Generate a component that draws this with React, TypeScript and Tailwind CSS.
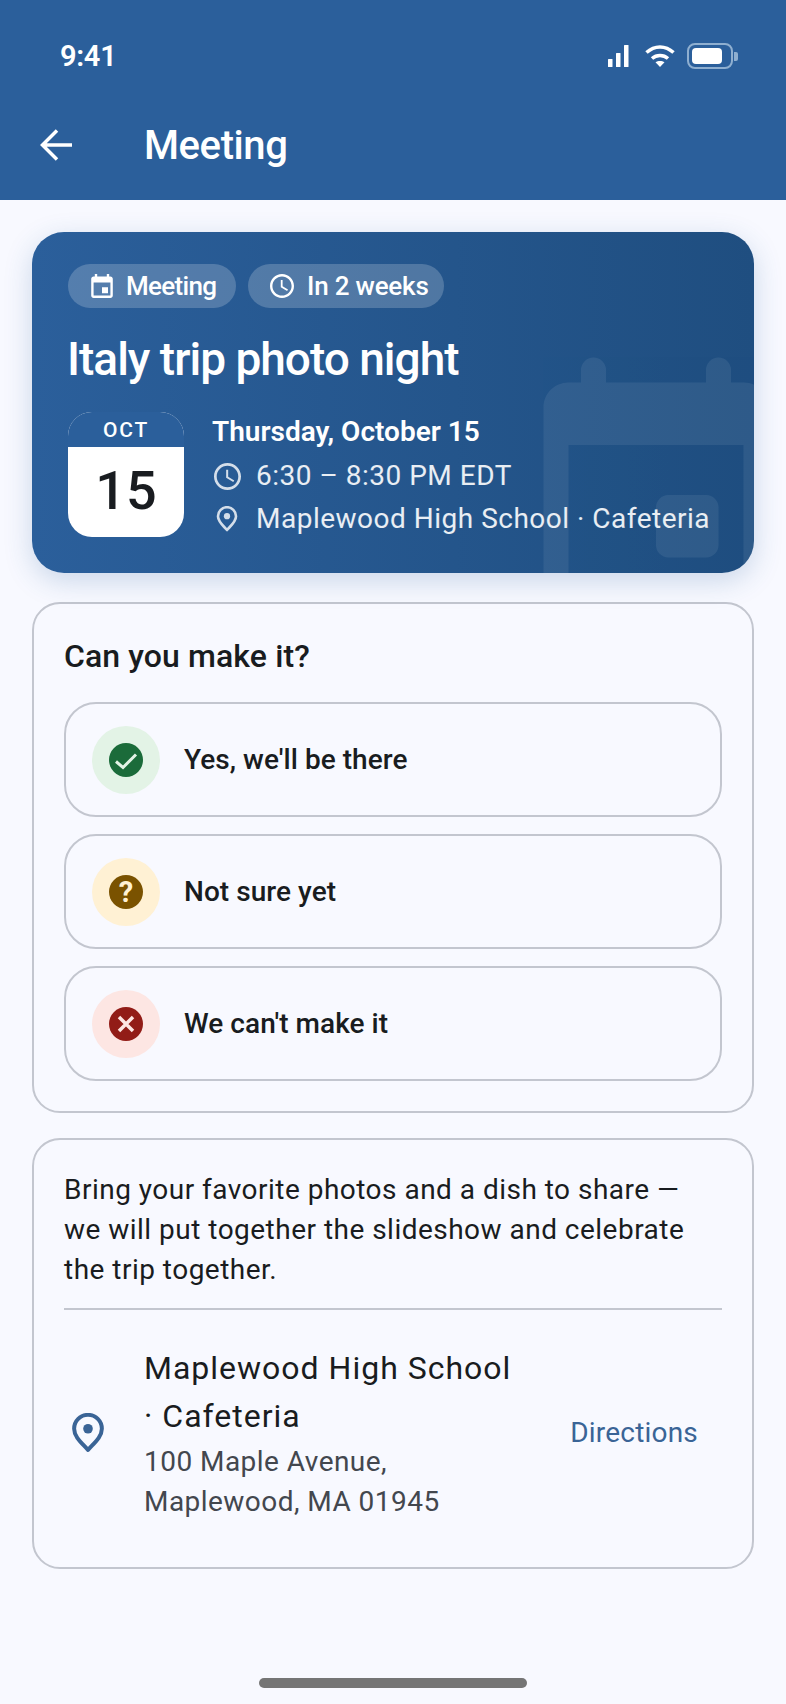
import React from "react";

const Clock = ({ className }: { className: string }) => (
  <svg viewBox="2 2 20 20" className={className} fill="currentColor">
    <path d="M11.99 2C6.47 2 2 6.48 2 12s4.47 10 9.99 10C17.52 22 22 17.52 22 12S17.52 2 11.99 2zM12 20c-4.42 0-8-3.58-8-8s3.58-8 8-8 8 3.58 8 8-3.58 8-8 8zm.5-13H11v6l5.25 3.15.75-1.23-4.5-2.67z" />
  </svg>
);

const Pin = ({ className }: { className: string }) => (
  <svg viewBox="0 0 24 30" className={className} fill="none">
    <path d="M12 27.7C8 23 1.6 18.2 1.6 11.8a10.4 10.4 0 0 1 20.8 0C22.4 18.2 16 23 12 27.7Z" stroke="currentColor" strokeWidth="3" strokeLinejoin="round" />
    <circle cx="12" cy="11.8" r="3.6" fill="currentColor" />
  </svg>
);

const Status = ({ bg, fg, children, label }: { bg: string; fg: string; children: React.ReactNode; label: string }) => (
  <div className="h-[115px] mb-[17px] last:mb-0 rounded-[32px] border-2 border-[#c3c6cf] flex items-center pl-[26px]">
    <div className={`w-[68px] h-[68px] rounded-full flex items-center justify-center ${bg}`}>
      <svg viewBox="0 0 34 34" className={`w-[34px] h-[34px] ${fg}`}>
        <circle cx="17" cy="17" r="17" fill="currentColor" />
        {children}
      </svg>
    </div>
    <span className="ml-[24px] text-[28px] leading-[40px] font-medium tracking-[0.05px] text-[#191c20]">{label}</span>
  </div>
);

export default function App() {
  return (
    <div className="w-[786px] h-[1704px] bg-[#f8f9ff] relative overflow-hidden font-['Roboto',sans-serif]">
      <header className="h-[200px] bg-[#2b5f9b] text-white">
        <div className="flex items-center justify-between pl-[60px] pr-[48px] pt-[38px] h-[74px]">
          <span className="text-[29px] leading-[36px] font-semibold tracking-[-0.3px]">9:41</span>
          <div className="flex items-center">
            <svg viewBox="0 0 21 22" className="w-[21px] h-[22px]" fill="white">
              <rect x="0" y="14" width="4.500" height="8" rx="0.5" />
              <rect x="8" y="8" width="4.500" height="14" rx="0.5" />
              <rect x="16" y="0" width="4.500" height="22" rx="0.5" />
            </svg>
            <svg viewBox="0 0 30 22" className="w-[30px] h-[22px] ml-[16px]" fill="none" stroke="white">
              <path d="M1.5 7.5C9.5 0 20.500 0 28.500 7.5" strokeWidth="3.500" />
              <path d="M7 13.500C11.500 9.500 18.500 9.500 23 13.500" strokeWidth="3.500" />
              <path d="M15 22L10.500 17.300C13 15.500 17 15.500 19.500 17.300Z" fill="white" stroke="none" />
            </svg>
            <div className="ml-[12px] w-[46px] h-[26px] rounded-[8px] border-2 border-[#8fafd0] p-[3px]">
              <div className="w-[30px] h-[16px] bg-white rounded-[4px]" />
            </div>
            <div className="ml-[1px] w-[4px] h-[9px] rounded-r-[2px] bg-[#8fafd0]" />
          </div>
        </div>
        <div className="flex items-center h-[60px] mt-[41px] pl-[40px]">
          <svg viewBox="0 0 32 32" className="w-[32px] h-[32px]" fill="none" stroke="white" strokeWidth="3.500">
            <path d="M32 16H2M17 1.500 2.500 16 17 30.500" />
          </svg>
          <h1 className="ml-[72px] mt-[2px] text-[40px] leading-[60px] font-medium tracking-[-0.4px]">Meeting</h1>
        </div>
      </header>

      <main className="px-[32px] pt-[32px]">
        <section className="relative h-[341px] rounded-[32px] overflow-hidden bg-gradient-to-r from-[#2b5f9b] to-[#1f4e80] shadow-[0_8px_28px_rgba(43,95,155,0.22)] text-white px-[36px] pt-[32px]">
          <svg viewBox="0 0 24 24" className="absolute -right-[52px] top-[113px] w-[300px] h-[300px] text-white opacity-[0.07]" fill="currentColor" fillRule="evenodd">
            <path d="M6 2a1 1 0 0 1 2 0v1h8V2a1 1 0 0 1 2 0v1h1c1.100 0 2 .9 2 2v14c0 1.100-.9 2-2 2H5c-1.110 0-2-.9-2-2V5c0-1.100.89-2 2-2h1V2zM5 8v11h14V8H5z" />
            <rect x="12" y="12" width="5" height="5" rx="1" />
          </svg>
          <div className="relative flex gap-[12px]">
            <div className="h-[44px] w-[168px] rounded-full bg-white/20 flex items-center pl-[23px]">
              <svg viewBox="3 1 18 20" className="w-[22px] h-[24px]" fill="white">
                <path d="M17 12h-5v5h5v-5zM16 1v2H8V1H6v2H5c-1.110 0-1.990.9-1.990 2L3 19c0 1.100.89 2 2 2h14c1.100 0 2-.9 2-2V5c0-1.100-.9-2-2-2h-1V1h-2zm3 18H5V8h14v11z" />
              </svg>
              <span className="ml-[13px] text-[26px] leading-[36px] font-medium tracking-[-0.7px]">Meeting</span>
            </div>
            <div className="h-[44px] w-[196px] rounded-full bg-white/20 flex items-center pl-[22px]">
              <Clock className="w-[24px] h-[24px]" />
              <span className="ml-[13px] text-[26px] leading-[36px] font-medium tracking-[-0.2px]">In 2 weeks</span>
            </div>
          </div>
          <h2 className="relative mt-[23px] -ml-[1px] text-[46px] leading-[56px] font-medium tracking-[-1px]">Italy trip photo night</h2>
          <div className="relative flex mt-[25px]">
            <div className="w-[116px] h-[125px] rounded-[24px] overflow-hidden bg-white flex flex-col items-center">
              <div className="w-full h-[35px] bg-[#2b5f9b] text-center text-[21px] leading-[36px] font-medium tracking-[1.700px]">OCT</div>
              <div className="text-[54px] leading-[88px] font-medium text-[#191c20]">15</div>
            </div>
            <div className="ml-[28px]">
              <div className="text-[28px] leading-[40px] font-semibold tracking-[0px]">Thursday, October 15</div>
              <div className="flex items-center h-[44px] mt-[2px] text-white/90">
                <Clock className="w-[27px] h-[27px] ml-[2px] text-white/80" />
                <span className="ml-[15px] text-[28px] leading-[40px] tracking-[0.5px]">6:30 – 8:30 PM EDT</span>
              </div>
              <div className="flex items-center h-[40px] mt-[1px] text-white/90">
                <Pin className="w-[22px] h-[26px] ml-[4px] text-white/80" />
                <span className="ml-[18px] text-[28px] leading-[40px] tracking-[0.5px]">Maplewood High School · Cafeteria</span>
              </div>
            </div>
          </div>
        </section>

        <section className="mt-[29px] h-[511px] rounded-[28px] border-2 border-[#c3c6cf] px-[30px] pt-[32px]">
          <h3 className="text-[32px] leading-[40px] font-medium tracking-[0.1px] text-[#191c20] mb-[26px]">Can you make it?</h3>
          <Status bg="bg-[#e3f3e6]" fg="text-[#1b6b3a]" label="Yes, we'll be there">
            <path d="M7 18.500 14 24.500 27 11.500" fill="none" stroke="#e3f3e6" strokeWidth="3" />
          </Status>
          <Status bg="bg-[#fff1d4]" fg="text-[#7a5200]" label="Not sure yet">
            <text x="17" y="27" textAnchor="middle" fontSize="29" fontWeight="700" fill="#fff1d4" fontFamily="Roboto, sans-serif">?</text>
          </Status>
          <Status bg="bg-[#fde6e3]" fg="text-[#921c17]" label="We can't make it">
            <path d="M10 10 24 24M24 10 10 24" fill="none" stroke="#fde6e3" strokeWidth="3.500" />
          </Status>
        </section>

        <section className="mt-[25px] h-[431px] rounded-[28px] border-2 border-[#c3c6cf] px-[30px] pt-[30px]">
          <p className="text-[28px] leading-[40px] tracking-[0.48px] text-[#191c20]">
            Bring your favorite photos and a dish to share —<br />
            we will put together the slideshow and celebrate<br />
            the trip together.
          </p>
          <div className="mt-[18px] h-[2px] bg-[#c3c6cf]" />
          <div className="flex items-center pt-[34px]">
            <Pin className="w-[32px] h-[40px] ml-[8px] text-[#3a6496]" />
            <div className="ml-[40px] flex-1">
              <div className="text-[32px] leading-[48px] tracking-[1px] text-[#191c20]">
                Maplewood High School<br />· Cafeteria
              </div>
              <div className="text-[28px] leading-[40px] mt-[2px] tracking-[0.46px] text-[#43474e]">
                100 Maple Avenue,<br />Maplewood, MA 01945
              </div>
            </div>
            <button className="mr-[24px] text-[28px] leading-[40px] tracking-[0.2px] text-[#3a6496]">Directions</button>
          </div>
        </section>
      </main>

      <div className="absolute left-[259px] top-[1678px] w-[268px] h-[10px] rounded-full bg-[#757575]" />
    </div>
  );
}
